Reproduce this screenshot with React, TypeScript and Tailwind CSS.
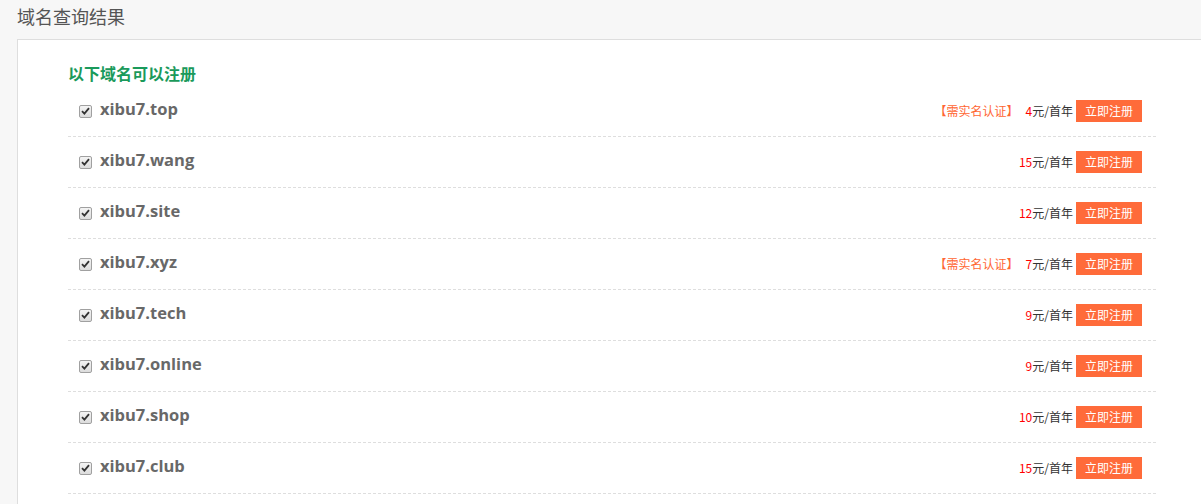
import React from 'react';

const domains = [
  { name: 'xibu7.top', price: 4, verify: true },
  { name: 'xibu7.wang', price: 15, verify: false },
  { name: 'xibu7.site', price: 12, verify: false },
  { name: 'xibu7.xyz', price: 7, verify: true },
  { name: 'xibu7.tech', price: 9, verify: false },
  { name: 'xibu7.online', price: 9, verify: false },
  { name: 'xibu7.shop', price: 10, verify: false },
  { name: 'xibu7.club', price: 15, verify: false },
];

const cjk = "font-['Microsoft_YaHei','Noto_Sans_CJK_SC',sans-serif]";

function CheckBox() {
  return (
    <span className="flex h-[13px] w-[13px] items-center justify-center rounded-[2px] border border-[#a0a0a0] bg-gradient-to-b from-[#f4f4f4] to-[#dcdcdc]">
      <svg width="9" height="8" viewBox="0 0 9 8">
        <path d="M1 4.2 L3.4 6.6 L8 1.2" fill="none" stroke="#333" strokeWidth="1.8" />
      </svg>
    </span>
  );
}

export default function App() {
  return (
    <div className={`h-[504px] w-[1201px] overflow-hidden bg-[#f7f7f7] ${cjk}`}>
      <div className="flex h-[39px] items-start pl-[17px] pt-[4px] text-[18px] leading-[24px] text-[#555]">
        域名查询结果
      </div>
      <div className="ml-[17px] w-[1220px] border border-[#dedede] bg-white pb-[40px] pl-[50px] pt-[20px]">
        <div className="h-[26px] text-[16px] font-bold leading-[26px] text-[#1a9a5b]">以下域名可以注册</div>
        <div className="w-[1088px]">
          {domains.map((d) => (
            <div
              key={d.name}
              className="flex h-[51px] items-center border-b border-dashed border-[#dedede] pl-[11px] pr-[14px]"
            >
              <CheckBox />
              <span className="ml-[8px] -mt-[4px] font-['Segoe_UI','Open_Sans',sans-serif] text-[16.5px] font-bold text-[#686868]">
                {d.name}
              </span>
              <div className="ml-auto flex items-center text-[12px]">
                {d.verify && <span className="mr-[7px] text-[#ff6633]">【需实名认证】</span>}
                <span className="text-[#ff0000]">{d.price}</span>
                <span className="text-[#333]">元/首年</span>
                <button className="ml-[3px] h-[22px] w-[66px] bg-[#ff6b3a] text-[12px] text-white">立即注册</button>
              </div>
            </div>
          ))}
        </div>
      </div>
    </div>
  );
}
